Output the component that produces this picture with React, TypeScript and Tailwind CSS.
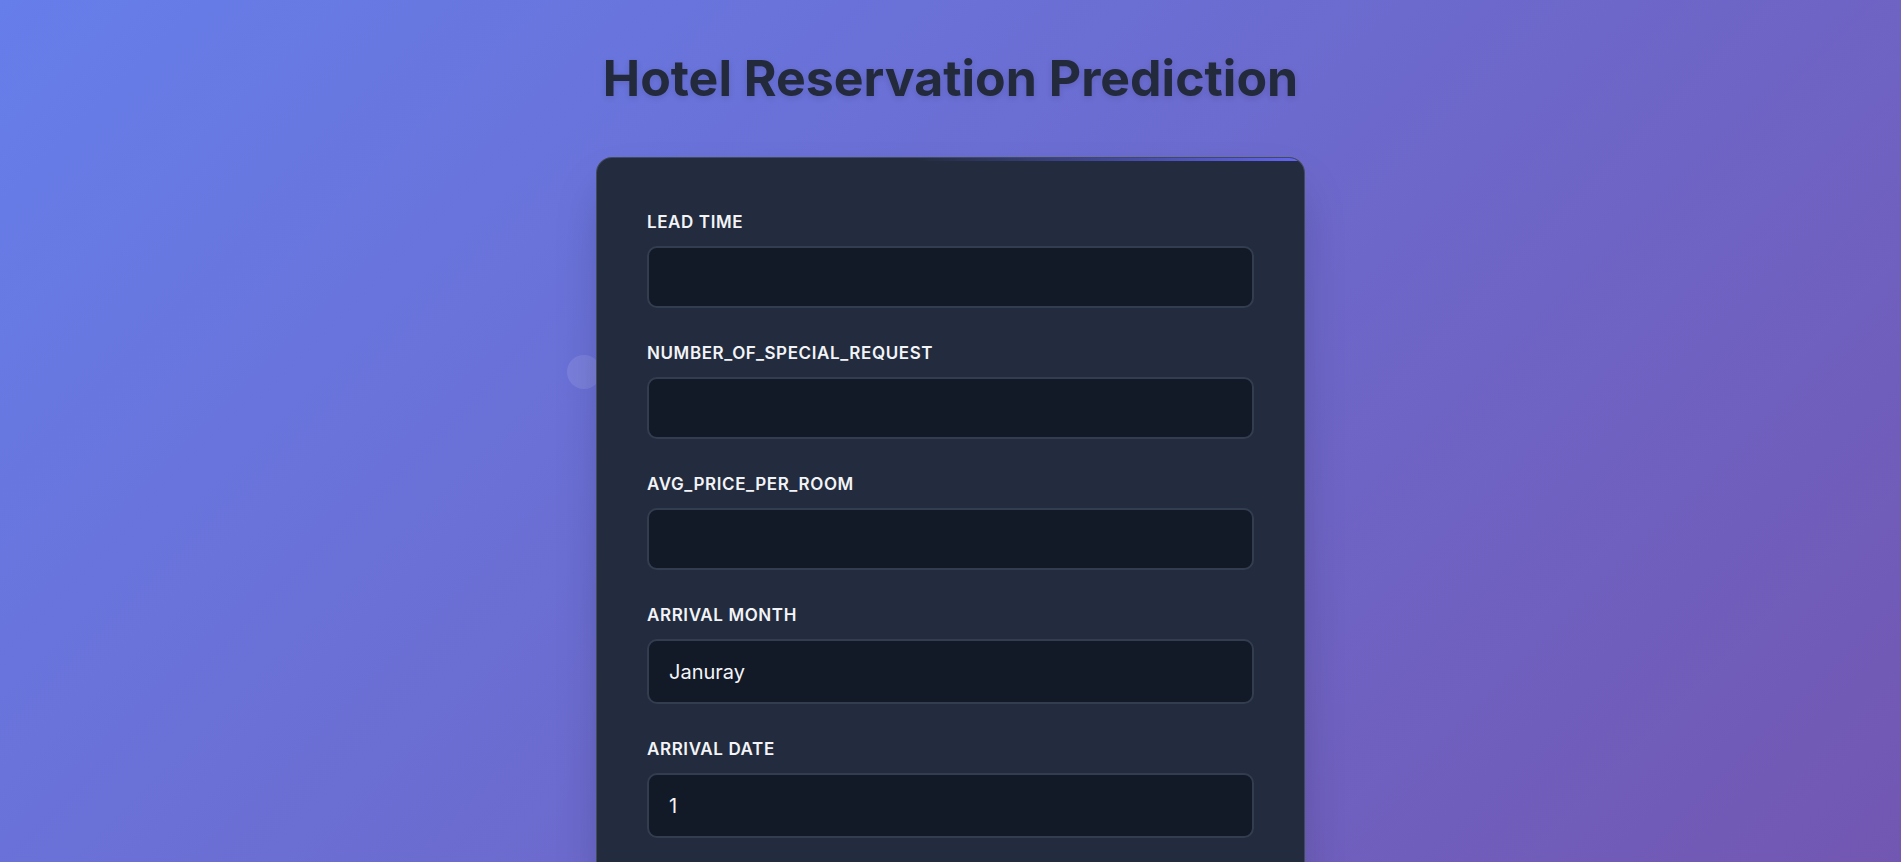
import React from "react";

type Field = {
  id: string;
  label: string;
  kind: "input" | "select";
  options?: string[];
};

const fields: Field[] = [
  { id: "lead_time", label: "Lead Time", kind: "input" },
  { id: "no_of_special_request", label: "Number_of_special_request", kind: "input" },
  { id: "avg_price_per_room", label: "Avg_price_per_room", kind: "input" },
  {
    id: "arrival_month",
    label: "Arrival Month",
    kind: "select",
    options: ["Januray", "February", "March", "April", "May", "June", "July", "August", "September", "October", "November", "December"],
  },
  {
    id: "arrival_date",
    label: "Arrival Date",
    kind: "select",
    options: Array.from({ length: 31 }, (_, i) => String(i + 1)),
  },
];

const FormField: React.FC<{ field: Field }> = ({ field }) => {
  const base =
    "w-full rounded-[10px] border-2 border-[#333d50] bg-[#121927] px-[20px] text-[20px] text-[#f3f5f9] outline-none";
  return (
    <div className="flex flex-col">
      <label
        htmlFor={field.id}
        className="mb-[13px] text-[17px] leading-[22px] font-semibold uppercase tracking-[0.6px] text-[#f3f4f8]"
      >
        {field.label}
      </label>
      {field.kind === "input" ? (
        <input id={field.id} type="text" className={`${base} h-[62px]`} />
      ) : (
        <select id={field.id} className={`${base} h-[65px] appearance-none`}>
          {field.options?.map((o) => (
            <option key={o}>{o}</option>
          ))}
        </select>
      )}
    </div>
  );
};

export default function App() {
  return (
    <div
      className="relative min-h-screen bg-[linear-gradient(135deg,#667eea_0%,#7257b2_100%)] bg-fixed pb-16"
      style={{ fontFamily: "Inter, 'Noto Sans', sans-serif" }}
    >
      {/* floating decoration */}
      <div className="absolute left-[567px] top-[355px] h-[34px] w-[34px] rounded-full bg-white/10" />

      <div className="flex flex-col items-center pt-[48px]">
        <h1 className="text-[50px] leading-[61px] font-bold text-[#222a3c] [text-shadow:0_2px_6px_rgba(0,0,0,0.12)]">
          Hotel Reservation Prediction
        </h1>

        <form className="relative mt-[48px] w-[709px] overflow-hidden rounded-2xl border border-white/15 bg-[#222c3e] px-[50px] pt-[53px] pb-[50px] shadow-2xl">
          <div className="absolute inset-x-0 top-0 h-[3px] bg-[linear-gradient(90deg,transparent_0%,transparent_45%,#6366f1_100%)]" />
          <div className="flex flex-col gap-[34px]">
            {fields.map((f) => (
              <FormField key={f.id} field={f} />
            ))}
          </div>
        </form>
      </div>
    </div>
  );
}
